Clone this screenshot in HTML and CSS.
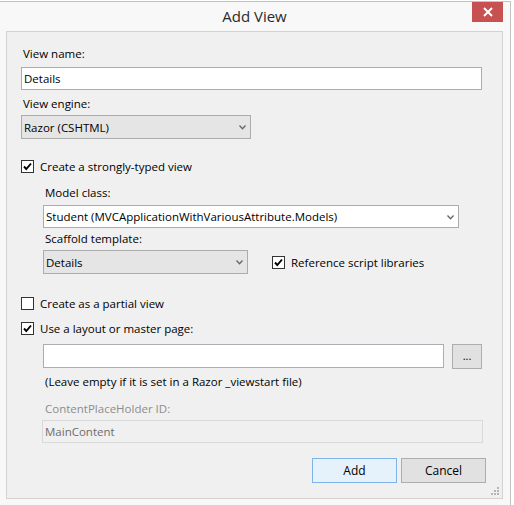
FILE: index.html
```html
<!DOCTYPE html>
<html>
<head>
<meta charset="utf-8">
<title>Add View</title>
<link rel="stylesheet" href="styles.css">
</head>
<body>
<div class="window">
  <div class="titlebar">
    <span class="spacer"></span>
    <div class="title">Add View</div>
    <div class="close"><svg width="10" height="10" viewBox="0 0 10 10"><path d="M1 1 L9 9 M9 1 L1 9" stroke="#fff" stroke-width="2" fill="none"/></svg></div>
  </div>
  <div class="client">
    <div class="lbl m-name">View name:</div>
    <div class="textbox tb-name">Details</div>
    <div class="lbl m-engine">View engine:</div>
    <div class="select sel-engine"><span>Razor (CSHTML)</span><svg class="chev" width="7" height="5" viewBox="0 0 7 5"><path d="M0.5 0.5 L3.5 3.8 L6.5 0.5" stroke="#666" stroke-width="1.3" fill="none"/></svg></div>
    <div class="check-row m-typed"><span class="cb"><svg width="11" height="11" viewBox="0 0 11 11"><path d="M2 5.5 L4.3 8 L9 2.5" stroke="#000" stroke-width="1.9" fill="none"/></svg></span><span>Create a strongly-typed view</span></div>
    <div class="indent">
      <div class="lbl m-model">Model class:</div>
      <div class="select white sel-model"><span>Student (MVCApplicationWithVariousAttribute.Models)</span><svg class="chev" width="7" height="5" viewBox="0 0 7 5"><path d="M0.5 0.5 L3.5 3.8 L6.5 0.5" stroke="#666" stroke-width="1.3" fill="none"/></svg></div>
      <div class="lbl m-scaffold">Scaffold template:</div>
      <div class="scaffold-row">
        <div class="select sel-scaffold"><span>Details</span><svg class="chev" width="7" height="5" viewBox="0 0 7 5"><path d="M0.5 0.5 L3.5 3.8 L6.5 0.5" stroke="#666" stroke-width="1.3" fill="none"/></svg></div>
        <div class="check-row ref"><span class="cb"><svg width="11" height="11" viewBox="0 0 11 11"><path d="M2 5.5 L4.3 8 L9 2.5" stroke="#000" stroke-width="1.9" fill="none"/></svg></span><span>Reference script libraries</span></div>
      </div>
    </div>
    <div class="check-row m-partial"><span class="cb"></span><span>Create as a partial view</span></div>
    <div class="check-row m-layout"><span class="cb"><svg width="11" height="11" viewBox="0 0 11 11"><path d="M2 5.5 L4.3 8 L9 2.5" stroke="#000" stroke-width="1.9" fill="none"/></svg></span><span>Use a layout or master page:</span></div>
    <div class="indent">
      <div class="layout-row">
        <div class="textbox tb-layout"></div>
        <div class="btn browse">...</div>
      </div>
      <div class="hint">(Leave empty if it is set in a Razor _viewstart file)</div>
      <div class="lbl disabled m-cph">ContentPlaceHolder ID:</div>
      <div class="textbox dis tb-cph">MainContent</div>
    </div>
    <div class="actions">
      <div class="btn primary">Add</div>
      <div class="btn">Cancel</div>
    </div>
    <div class="grip-row"><svg width="8" height="8" viewBox="0 0 8 8" fill="#b5b5b5"><rect x="6" y="0" width="2" height="2"/><rect x="3" y="3" width="2" height="2"/><rect x="6" y="3" width="2" height="2"/><rect x="0" y="6" width="2" height="2"/><rect x="3" y="6" width="2" height="2"/><rect x="6" y="6" width="2" height="2"/></svg></div>
  </div>
</div>
</body>
</html>
```
FILE: styles.css
```css
* { box-sizing: border-box; }
html, body { margin: 0; padding: 0; background: #ffffff; }
body {
  font-family: "Open Sans", "Noto Sans", sans-serif;
  font-size: 11.5px;
  color: #000;
}
.window {
  margin-top: 1px;
  width: 511px;
  height: 504px;
  background: #f8f8f8;
  border-top: 1px solid #c3c3c3;
  border-right: 1px solid #c3c3c3;
}
.titlebar {
  display: grid;
  grid-template-columns: 1fr auto 1fr;
  height: 29px;
  padding-right: 7px;
}
.title {
  font-size: 15px;
  color: #2b2b2b;
  line-height: 29px;
  padding-left: 6px;
}
.close {
  justify-self: end;
  width: 31px;
  height: 20px;
  background: #c75050;
  display: flex;
  align-items: center;
  justify-content: center;
}
.close svg { display: block; }
.client {
  margin-left: 6px;
  width: 497px;
  height: 468px;
  background: #f0f0f0;
  border: 1px solid #d2d2d2;
  padding: 0 14px;
  display: flex;
  flex-direction: column;
  align-items: flex-start;
}
.lbl { line-height: 15px; padding-left: 2px; white-space: nowrap; }
.lbl.disabled { color: #8d8d8d; }
.textbox {
  height: 23px;
  background: #fff;
  border: 1px solid #abadb3;
  padding: 0 2px;
  line-height: 21px;
  white-space: nowrap;
}
.textbox.dis { background: #f0f0f0; border-color: #d9d9d9; color: #6d6d6d; }
.select {
  height: 24px;
  border: 1px solid #acacac;
  background: #e5e5e5;
  display: flex;
  align-items: center;
  justify-content: space-between;
  padding: 0 4px 0 2px;
  white-space: nowrap;
}
.select.white { background: #fff; height: 23px; }
.chev { display: block; margin-top: 1px; }
.check-row {
  display: flex;
  align-items: center;
  gap: 6px;
  height: 15px;
  white-space: nowrap;
}
.cb {
  width: 13px;
  height: 13px;
  border: 1px solid #333;
  background: #fff;
  display: flex;
  align-items: center;
  justify-content: center;
  flex: none;
}
.cb svg { display: block; }
.indent {
  padding-left: 22px;
  display: flex;
  flex-direction: column;
  align-items: flex-start;
  align-self: stretch;
}
.m-name { margin-top: 14px; }
.tb-name { margin-top: 6px; width: 461px; }
.m-engine { margin-top: 6px; }
.sel-engine { margin-top: 4px; width: 230px; }
.m-typed { margin-top: 20px; }
.m-model { margin-top: 11px; }
.sel-model { margin-top: 5px; width: 416px; }
.m-scaffold { margin-top: 3px; }
.scaffold-row {
  margin-top: 4px;
  display: flex;
  align-items: center;
  gap: 24px;
}
.sel-scaffold { width: 205px; }
.m-partial { margin-top: 22px; }
.m-layout { margin-top: 10px; }
.layout-row {
  margin-top: 8px;
  display: flex;
  align-items: flex-start;
  gap: 8px;
}
.tb-layout { width: 401px; height: 24px; }
.btn {
  height: 25px;
  border: 1px solid #adadad;
  background: #e1e1e1;
  display: flex;
  align-items: center;
  justify-content: center;
  line-height: 1;
}
.browse { width: 30px; font-size: 11px; padding-bottom: 3px; }
.hint { margin-top: 5px; line-height: 15px; padding-left: 2px; }
.m-cph { margin-top: 12px; }
.tb-cph { margin-top: 4px; width: 441px; margin-left: -1px; }
.actions {
  margin-top: 15px;
  align-self: stretch;
  display: flex;
  justify-content: flex-end;
  gap: 4px;
  padding-right: 2px;
}
.actions .btn { width: 85px; font-size: 12px; }
.actions .btn.primary { background: #e5f1fb; border-color: #7eb4ea; }
.grip-row {
  margin-top: 4px;
  align-self: stretch;
  display: flex;
  justify-content: flex-end;
  margin-right: -11px;
}
.grip-row svg { display: block; }
```
